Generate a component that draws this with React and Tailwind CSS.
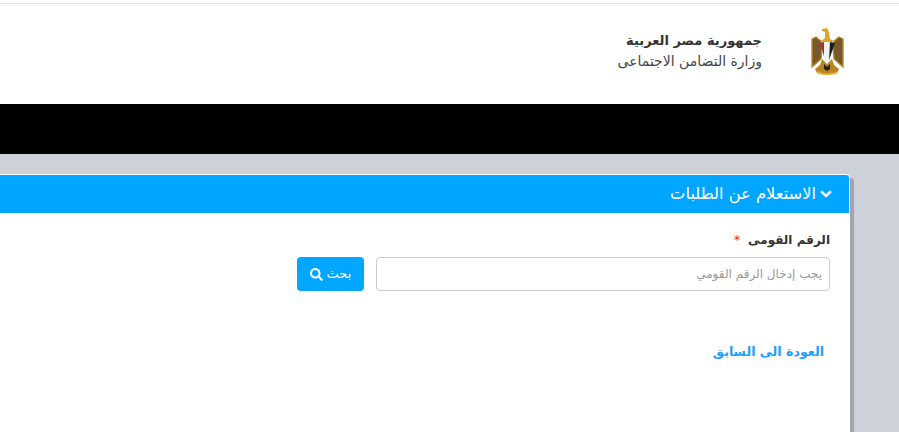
import React from 'react';
import { FaChevronDown, FaSearch } from 'react-icons/fa';

function Emblem() {
  return (
    <svg width="33" height="47" viewBox="0 0 33 47" className="shrink-0">
      {/* wings */}
      <path d="M1 11 L5 9 L10 13 L11 20 L10 31 L1 39 Z" fill="#75592a" stroke="#b98a2a" strokeWidth="1.3" />
      <path d="M32 11 L28 9 L23 13 L22 20 L23 31 L32 39 Z" fill="#75592a" stroke="#b98a2a" strokeWidth="1.3" />
      {/* head and neck */}
      <path d="M11 1 L16 0 L18 4 L19 11 L23 13 L16 16 L10 13 L14 10 L14 4 L11 3 Z" fill="#dba52c" />
      {/* shield */}
      <path d="M9 15 L13 14 L14 32 Z" fill="#c4212b" />
      <rect x="13" y="14" width="6" height="20" fill="#f2f2f2" />
      <path d="M19 14 L24 15 L18 32 Z" fill="#1c1c1c" />
      {/* legs and scroll */}
      <path d="M11 31 L16 36 L21 31 L23 37 L28 41 L26 45 L16 47 L6 45 L4 41 L9 37 Z" fill="#b8861f" />
      <path d="M13 36 L16 39 L19 36 L19 41 L16 43 L13 41 Z" fill="#2a2210" />
      <path d="M6 43 Q16 48 27 43 L26 46 Q16 48 7 46 Z" fill="#e3b544" />
    </svg>
  );
}

export default function App() {
  return (
    <div dir="rtl" className="h-[432px] overflow-hidden bg-[#cdd1da] font-['DejaVu_Sans','Noto_Sans',sans-serif]">
      <div className="h-[104px] bg-white pt-[3px]">
        <div className="h-px bg-[#e5e5e5]"></div>
        <div className="flex items-start pt-[24px] pr-[55px]">
          <Emblem />
          <div className="mr-[49px] pt-[1px] text-[#333]">
            <div className="text-[13px] leading-[23px] font-bold">جمهورية مصر العربية</div>
            <div className="text-[14px] leading-[19px] text-[#444]">وزارة التضامن الاجتماعى</div>
          </div>
        </div>
      </div>
      <div className="h-[50px] bg-black"></div>

      <div className="pt-5 pr-[49px] -ml-4">
        <div className="h-[300px] rounded-t-[4px] border border-white bg-white shadow-[4px_4px_0_0_#a3a5ac]">
          <div className="flex h-[38px] items-center gap-1 bg-[#00a6ff] pr-[17px] text-white rounded-t-[3px]">
            <FaChevronDown className="text-[12px] stroke-white stroke-[40px]" />
            <span className="text-[16.3px]">الاستعلام عن الطلبات</span>
          </div>
          <div className="pr-[19px] pt-[17px]">
            <div className="flex items-center gap-[8px] text-[12px] font-bold leading-[20px] text-[#333]">
              <span>الرقم القومى</span>
              <span className="text-[#e01818] font-normal">*</span>
            </div>
            <div className="mt-[7px] flex gap-3">
              <input
                readOnly
                placeholder="يجب إدخال الرقم القومي"
                className="h-[34px] w-[454px] rounded-[4px] border border-[#ccc] bg-white px-[7px] text-[12px] placeholder:text-[#999] outline-none"
              />
              <button className="flex h-[34px] w-[67px] items-center justify-center gap-1 rounded-[4px] bg-[#00a6ff] text-[13px] text-white">
                <span>بحث</span>
                <FaSearch className="text-[13px]" />
              </button>
            </div>
            <a className="mt-[52px] mr-[6px] block text-[12.6px] font-bold text-[#1e9fff]">العودة الى السابق</a>
          </div>
        </div>
      </div>
    </div>
  );
}
